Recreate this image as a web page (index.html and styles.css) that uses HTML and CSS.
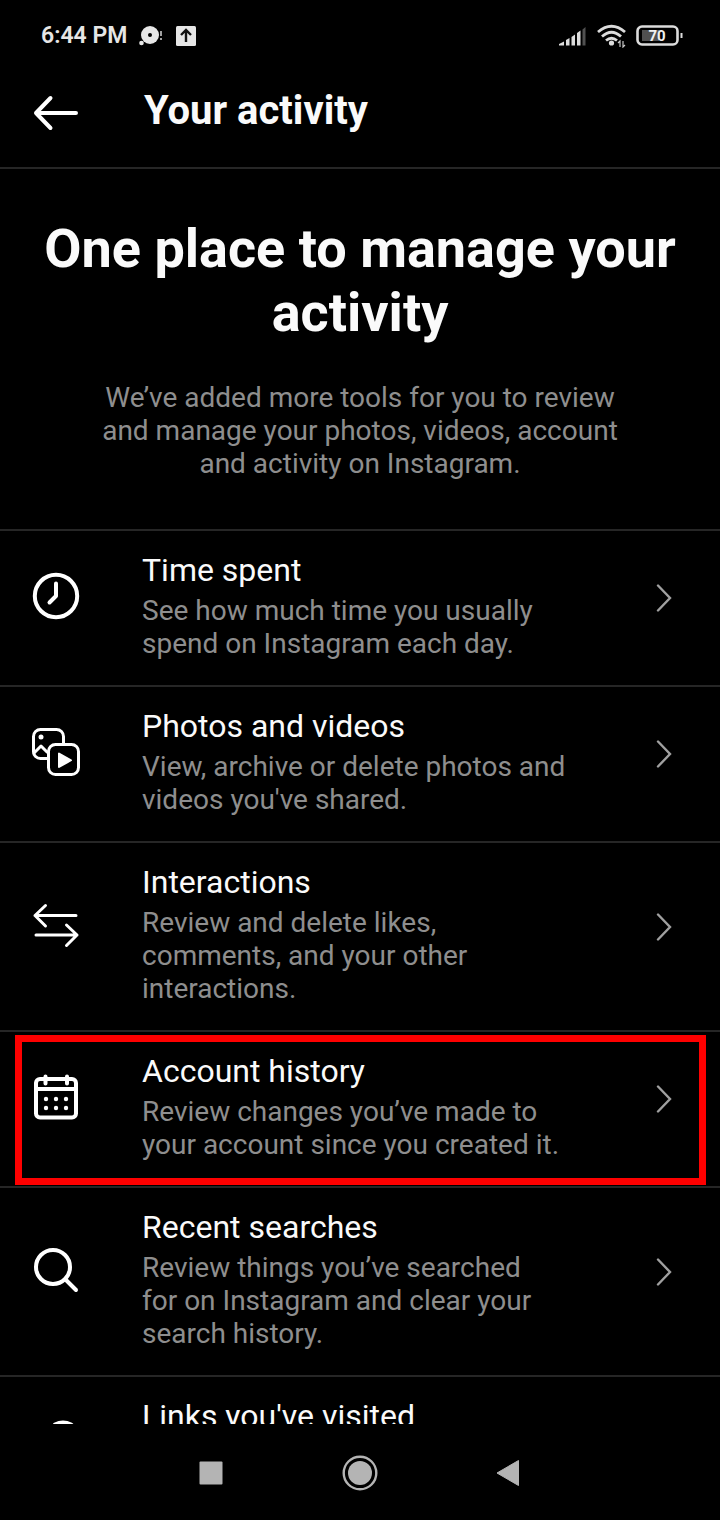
FILE: index.html
```html
<!DOCTYPE html>
<html lang="en">
<head>
<meta charset="utf-8">
<meta name="viewport" content="width=device-width, initial-scale=1">
<title>Your activity</title>
<link rel="stylesheet" href="styles.css">
</head>
<body>
<div class="status">
  <div class="status-group">
    <span class="clock">6:44 PM</span>
    <svg class="disc" width="24" height="22" viewBox="0 0 24 22" aria-hidden="true"><circle cx="11" cy="10" r="9" fill="#e6e6e6"/><circle cx="11" cy="10" r="2" fill="#000"/><circle cx="2.500" cy="18" r="2.300" fill="#e6e6e6"/><path d="M22 6v5M22 13v2" stroke="#c8c8c8" stroke-width="1.600"/></svg>
    <svg width="22" height="22" viewBox="0 0 22 22" aria-hidden="true"><rect x="1" y="1" width="20" height="20" rx="1.500" fill="#e6e6e6"/><path d="M11 17V5M6 10l5-5 5 5" fill="none" stroke="#111" stroke-width="2.400"/></svg>
  </div>
  <div class="status-group status-right">
    <svg width="28" height="20" viewBox="0 0 28 20" aria-hidden="true"><path d="M1 19.500v-1.500l5-2.500v4zM8 14l3.500-2v7.500H8zM13.500 11l3.500-2.500v11h-3.500zM19 7l3.500-2.500v15H19z" fill="#dcdcdc"/><path d="M24.500 3.500L27.500 1v18.500h-3z" fill="#505050"/></svg>
    <svg width="30" height="24" viewBox="0 0 30 24" aria-hidden="true"><g fill="none" stroke="#dcdcdc" stroke-width="2.800"><path d="M2 8Q15.500-3.500 29 8"/><path d="M6 12.500Q15.500 4 25 12.500"/><path d="M10 16.500Q15.500 12 21 16.500"/></g><circle cx="15.500" cy="19" r="2.600" fill="#dcdcdc"/><path d="M24 23v-6l-2 2M27 17v6l2-2" fill="none" stroke="#c8c8c8" stroke-width="1.200"/></svg>
    <svg width="48" height="22" viewBox="0 0 48 22" role="img" aria-label="Battery 70 percent"><rect x="1.500" y="1.500" width="40" height="18" rx="4.500" fill="none" stroke="#dcdcdc" stroke-width="2.600"/><rect x="6" y="5" width="17" height="11" fill="#505050"/><path d="M45.500 8v5" stroke="#dcdcdc" stroke-width="2"/><text x="21" y="16" class="battery-text">70</text></svg>
  </div>
</div>

<header class="bar">
  <button class="back" type="button" aria-label="Back"><svg width="48" height="40" viewBox="0 0 48 40"><path d="M44 22H4M18.500 7L4 22l14.500 15" class="line"/></svg></button>
  <h1 class="bar-title">Your activity</h1>
</header>

<main class="content">
  <section class="intro">
    <h2 class="headline">One place to manage your activity</h2>
    <p class="lead">We’ve added more tools for you to review and manage your photos, videos, account and activity on Instagram.</p>
  </section>

  <nav class="list" aria-label="Activity">
    <a class="row" href="#time">
      <svg class="icon" viewBox="0 0 48 48" aria-hidden="true"><circle cx="24" cy="24" r="21.200" class="line"/><path d="M24 11.500V24l-6.500 6.500" class="line"/></svg>
      <span class="text"><span class="name">Time spent</span><span class="desc">See how much time you usually spend on Instagram each day.</span></span>
      <svg class="chevron" viewBox="0 0 16 28" aria-hidden="true"><path d="M2 1.500L14 14 2 26.500"/></svg>
    </a>
    <a class="row" href="#media">
      <svg class="icon" viewBox="0 0 48 48" aria-hidden="true"><path d="M15 30.500H8.500a7 7 0 0 1-7-7V8.500a7 7 0 0 1 7-7h16a7 7 0 0 1 7 7V15" class="line thin"/><path d="M2 25l7-7 6 6" class="line thin"/><circle cx="9" cy="9" r="2.500" fill="#fff"/><rect x="16.500" y="16.500" width="30" height="30" rx="7" class="line thin"/><path d="M27 25.500v13.500l12-6.750z" fill="#fff" stroke="#fff" stroke-width="2" stroke-linejoin="round"/></svg>
      <span class="text"><span class="name">Photos and videos</span><span class="desc">View, archive or delete photos and videos you've shared.</span></span>
      <svg class="chevron" viewBox="0 0 16 28" aria-hidden="true"><path d="M2 1.500L14 14 2 26.500"/></svg>
    </a>
    <a class="row" href="#interactions">
      <svg class="icon" viewBox="0 0 48 48" aria-hidden="true"><path d="M44 14.500H3M13.500 4.500L3 14.500l10.500 10.500M4 34h41M34.500 24L45 34 34.500 44.500" class="line thin"/></svg>
      <span class="text"><span class="name">Interactions</span><span class="desc">Review and delete likes, comments, and your other interactions.</span></span>
      <svg class="chevron" viewBox="0 0 16 28" aria-hidden="true"><path d="M2 1.500L14 14 2 26.500"/></svg>
    </a>
    <a class="row marked" href="#history">
      <svg class="icon" viewBox="0 0 48 48" aria-hidden="true"><rect x="4" y="6" width="40" height="38.500" rx="4" class="line"/><path d="M4 16h40" class="line"/><path d="M13.500 3.500v7M35 3.500v7" class="line"/><g fill="#fff"><circle cx="14" cy="26" r="2.200"/><circle cx="24" cy="26" r="2.200"/><circle cx="34" cy="26" r="2.200"/><circle cx="14" cy="35" r="2.200"/><circle cx="24" cy="35" r="2.200"/><circle cx="34" cy="35" r="2.200"/></g></svg>
      <span class="text"><span class="name">Account history</span><span class="desc">Review changes you’ve made to your account since you created it.</span></span>
      <svg class="chevron" viewBox="0 0 16 28" aria-hidden="true"><path d="M2 1.500L14 14 2 26.500"/></svg>
    </a>
    <a class="row" href="#searches">
      <svg class="icon" viewBox="0 0 48 48" aria-hidden="true"><circle cx="21" cy="21" r="17" class="line"/><path d="M33.500 33.500L44 44" class="line"/></svg>
      <span class="text"><span class="name">Recent searches</span><span class="desc">Review things you’ve searched<br>for on Instagram and clear your search history.</span></span>
      <svg class="chevron" viewBox="0 0 16 28" aria-hidden="true"><path d="M2 1.500L14 14 2 26.500"/></svg>
    </a>
    <a class="row" href="#links">
      <svg class="icon" viewBox="0 0 48 48" aria-hidden="true"><path d="M19 28a11 11 0 0 1 0-14l4-7.500Q31 2.500 39 6.500a11 11 0 0 1 0 17l-5 5M29 20a11 11 0 0 1 0 14l-5 6a10.500 10.500 0 0 1-15-15l5-5" class="line"/></svg>
      <span class="text"><span class="name">Links you've visited</span></span>
      <svg class="chevron" viewBox="0 0 16 28" aria-hidden="true"><path d="M2 1.500L14 14 2 26.500"/></svg>
    </a>
  </nav>
</main>

<footer class="system-nav">
  <button type="button" aria-label="Recent apps"><svg width="36" height="36" viewBox="0 0 36 36"><rect x="6.500" y="6.500" width="23" height="23" rx="1" fill="#b4b4b4"/></svg></button>
  <button type="button" aria-label="Home"><svg width="36" height="36" viewBox="0 0 36 36"><circle cx="18" cy="18" r="16.300" fill="none" stroke="#b4b4b4" stroke-width="2.400"/><circle cx="18" cy="18" r="12" fill="#b4b4b4"/></svg></button>
  <button type="button" aria-label="Back"><svg width="36" height="36" viewBox="0 0 36 36"><path d="M6 18L27.500 5.500v25z" fill="#b4b4b4" stroke="#b4b4b4" stroke-linejoin="round"/></svg></button>
</footer>
</body>
</html>
```

FILE: styles.css
```css
* { box-sizing: border-box; }

body {
  margin: 0;
  height: 100vh;
  display: flex;
  flex-direction: column;
  background: #000;
  color: #fafafa;
  font-family: Roboto, "Liberation Sans", sans-serif;
  overflow: hidden;
}

h1, h2, p { margin: 0; }
svg { display: block; flex: none; }

button {
  padding: 0;
  border: 0;
  background: none;
  color: inherit;
}

.line {
  fill: none;
  stroke: #fff;
  stroke-width: 4;
  stroke-linecap: round;
  stroke-linejoin: round;
}
.thin { stroke-width: 3; }

.status {
  flex: none;
  display: flex;
  justify-content: space-between;
  align-items: center;
  height: 70px;
  padding: 1px 36px 0 41px;
}
.status-group {
  display: flex;
  align-items: center;
  gap: 12px;
}
.status-right { gap: 10px; }
.clock {
  font-size: 23px;
  font-weight: 600;
  line-height: 28px;
  color: #e6e6e6;
}
.battery-text {
  font-size: 15px;
  font-weight: 700;
  fill: #f0f0f0;
  text-anchor: middle;
}

.bar {
  flex: none;
  display: flex;
  align-items: center;
  gap: 64px;
  height: 99px;
  padding: 0 32px 15px;
  border-bottom: 2px solid #262626;
}
.bar-title {
  font-size: 40px;
  font-weight: 700;
  line-height: 48px;
}

.content {
  flex: 1;
  min-height: 0;
  overflow: hidden;
}
.intro {
  padding: 48px 32px 49px;
  text-align: center;
}
.headline {
  font-size: 54px;
  font-weight: 700;
  line-height: 64px;
}
.lead {
  padding: 36px 64px 0;
  font-size: 28px;
  line-height: 33px;
  color: #8e8e8e;
}

.row {
  position: relative;
  display: flex;
  align-items: center;
  padding: 0 48px 25px 32px;
  border-top: 2px solid #262626;
  color: inherit;
  text-decoration: none;
}
.icon {
  width: 48px;
  height: 48px;
  margin-top: 1px;
}
.text {
  flex: 1;
  display: flex;
  flex-direction: column;
  gap: 5px;
  min-height: 129px;
  padding: 20px 84px 0 62px;
}
.name {
  font-size: 32px;
  line-height: 38px;
}
.desc {
  font-size: 28px;
  line-height: 33px;
  color: #8e8e8e;
}
.chevron {
  width: 16px;
  height: 28px;
  margin-top: 5px;
  fill: none;
  stroke: #a0a0a0;
  stroke-width: 2.4;
  stroke-linecap: round;
}
.marked::after {
  content: "";
  position: absolute;
  inset: 3px 14px 1px 15px;
  border: 7px solid #fe0000;
}

.system-nav {
  flex: none;
  display: flex;
  justify-content: center;
  align-items: center;
  gap: 113px;
  height: 96px;
  padding: 1px 1px 0 0;
}
```
